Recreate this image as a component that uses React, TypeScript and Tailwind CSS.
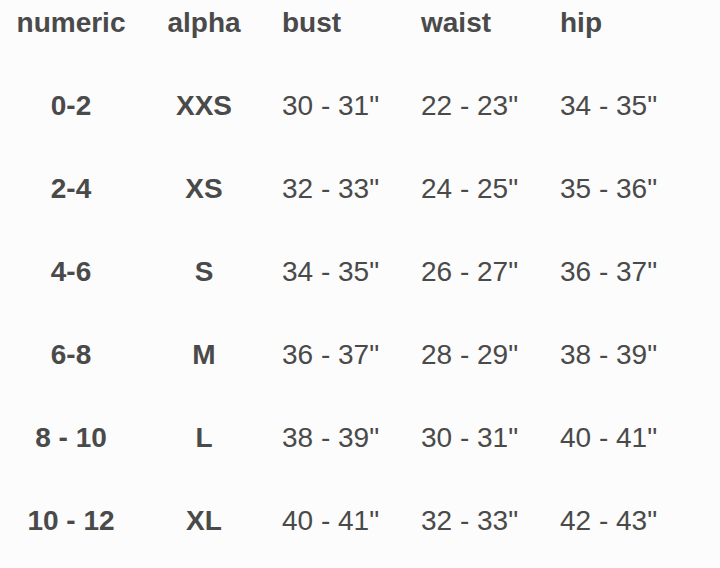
const header = ['numeric', 'alpha', 'bust', 'waist', 'hip'];

const rows = [
  ['0-2', 'XXS', '30 - 31"', '22 - 23"', '34 - 35"'],
  ['2-4', 'XS', '32 - 33"', '24 - 25"', '35 - 36"'],
  ['4-6', 'S', '34 - 35"', '26 - 27"', '36 - 37"'],
  ['6-8', 'M', '36 - 37"', '28 - 29"', '38 - 39"'],
  ['8 - 10', 'L', '38 - 39"', '30 - 31"', '40 - 41"'],
  ['10 - 12', 'XL', '40 - 41"', '32 - 33"', '42 - 43"'],
];

const cols = 'grid grid-cols-[142px_124px_139px_139px_139px]';

const App = () => {
  return (
    <div
      className="w-[720px] h-[568px] bg-[#fcfcfc] text-[#4a4a4a] text-[28px] leading-[28px] overflow-hidden"
      style={{ fontFamily: '"Liberation Sans", Arial, sans-serif' }}
    >
      <div className={`${cols} h-[46px] items-center font-bold`}>
        <div className="text-center">{header[0]}</div>
        <div className="text-center">{header[1]}</div>
        <div className="pl-4">{header[2]}</div>
        <div className="pl-4">{header[3]}</div>
        <div className="pl-4">{header[4]}</div>
      </div>
      <div className="pt-[18px]">
        {rows.map((r) => (
          <div key={r[0]} className={`${cols} h-[83px] items-center`}>
            <div className="text-center font-bold">{r[0]}</div>
            <div className="text-center font-bold">{r[1]}</div>
            <div className="pl-4">{r[2]}</div>
            <div className="pl-4">{r[3]}</div>
            <div className="pl-4">{r[4]}</div>
          </div>
        ))}
      </div>
    </div>
  );
};

export default App;
